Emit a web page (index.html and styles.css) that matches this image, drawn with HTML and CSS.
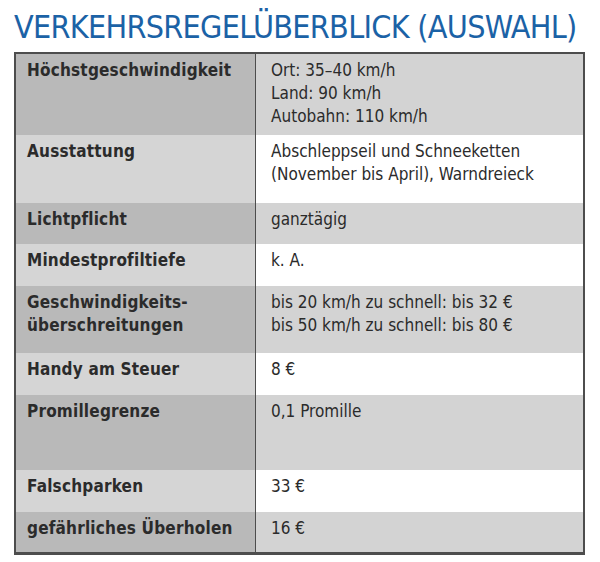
FILE: index.html
```html
<!DOCTYPE html>
<html lang="de">
<head>
<meta charset="utf-8">
<title>Verkehrsregelüberblick</title>
<link rel="stylesheet" href="styles.css">
</head>
<body>
<div class="page">
  <h1 class="title">VERKEHRSREGELÜBERBLICK (AUSWAHL)</h1>
  <div class="table">
    <div class="cell key r1">Höchstgeschwindigkeit</div>
    <div class="cell val r1">Ort: 35–40 km/h<br>Land: 90 km/h<br>Autobahn: 110 km/h</div>
    <div class="cell key even">Ausstattung</div>
    <div class="cell val even">Abschleppseil und Schneeketten<br>(November bis April), Warndreieck</div>
    <div class="cell key">Lichtpflicht</div>
    <div class="cell val">ganztägig</div>
    <div class="cell key even">Mindestprofiltiefe</div>
    <div class="cell val even">k. A.</div>
    <div class="cell key">Geschwindigkeits-<br>überschreitungen</div>
    <div class="cell val">bis 20 km/h zu schnell: bis 32 €<br>bis 50 km/h zu schnell: bis 80 €</div>
    <div class="cell key even">Handy am Steuer</div>
    <div class="cell val even">8 €</div>
    <div class="cell key">Promillegrenze</div>
    <div class="cell val">0,1 Promille</div>
    <div class="cell key even">Falschparken</div>
    <div class="cell val even">33 €</div>
    <div class="cell key">gefährliches Überholen</div>
    <div class="cell val">16 €</div>
  </div>
</div>
</body>
</html>
```

FILE: styles.css
```css
html, body {
  margin: 0;
  padding: 0;
  background: #ffffff;
}

.page {
  padding: 9px 15px 0 14px;
  width: 571px;
}

.title {
  margin: 0 0 6px 0;
  font-family: "DejaVu Sans Condensed", "DejaVu Sans", sans-serif;
  font-stretch: condensed;
  font-weight: normal;
  font-size: 32px;
  line-height: 37px;
  color: #1b62a6;
  letter-spacing: -0.7px;
  white-space: nowrap;
}

.table {
  display: grid;
  grid-template-columns: 240px 1fr;
  grid-template-rows: 81px 68px 41px 42px 67px 42px 75px 42px 40px;
  border: 2px solid #4d4d4d;
  border-bottom-width: 3px;
  font-family: "DejaVu Sans Condensed", "DejaVu Sans", sans-serif;
  font-stretch: condensed;
  font-size: 17px;
  line-height: 23px;
  color: #2b2b2b;
}

.cell {
  padding: 5px 0 0 11px;
}

.key {
  font-weight: bold;
  letter-spacing: 0.2px;
  background: #b9b9b9;
  border-right: 1px solid #4d4d4d;
}

.key.even {
  background: #d5d5d5;
}

.val {
  padding-left: 15px;
  background: #d3d3d3;
}

.val.even {
  background: #ffffff;
}
```
